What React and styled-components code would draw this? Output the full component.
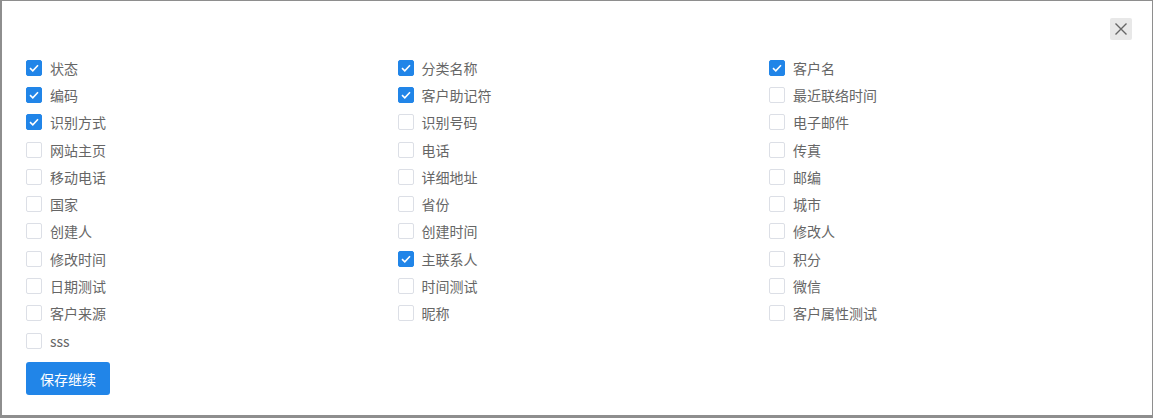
import React, { useState } from 'react'
import styled, { createGlobalStyle } from 'styled-components'

const GlobalStyle = createGlobalStyle`
  html, body {
    margin: 0;
    padding: 0;
    background: #8e8e8e;
  }
  body {
    font-family: "Noto Sans CJK SC", "Noto Sans", sans-serif;
  }
`

const Panel = styled.div`
  margin: 1px 1px 3px 2px;
  height: 414px;
  background: #fff;
  box-sizing: border-box;
  padding: 17px 20px 0 24px;
  display: flex;
  flex-direction: column;
`

const Header = styled.div`
  display: flex;
  justify-content: flex-end;
  height: 36px;
`

const CloseButton = styled.button`
  width: 22px;
  height: 22px;
  padding: 0;
  border: none;
  border-radius: 2px;
  background: #e8e8e8;
  color: #666;
  display: flex;
  align-items: center;
  justify-content: center;
  cursor: pointer;
`

const Grid = styled.div`
  display: grid;
  grid-template-columns: repeat(3, 371.5px);
  grid-auto-rows: 27.3px;
`

const Item = styled.label`
  display: flex;
  align-items: center;
  gap: 8px;
  font-size: 14px;
  color: #666;
  cursor: pointer;
`

const Box = styled.span`
  width: 16px;
  height: 16px;
  box-sizing: border-box;
  border-radius: 2px;
  border: 1px solid ${p => (p.$checked ? '#2185e8' : '#dcdfe6')};
  background: ${p => (p.$checked ? '#2185e8' : '#fff')};
  display: flex;
  align-items: center;
  justify-content: center;
  flex: none;
`

const SaveButton = styled.button`
  margin-top: 8px;
  align-self: flex-start;
  width: 84px;
  height: 33px;
  border: none;
  border-radius: 3px;
  background: #2185e8;
  color: #fff;
  font-family: inherit;
  font-size: 14px;
  cursor: pointer;
`

const fields = [
  ['状态', true], ['分类名称', true], ['客户名', true],
  ['编码', true], ['客户助记符', true], ['最近联络时间', false],
  ['识别方式', true], ['识别号码', false], ['电子邮件', false],
  ['网站主页', false], ['电话', false], ['传真', false],
  ['移动电话', false], ['详细地址', false], ['邮编', false],
  ['国家', false], ['省份', false], ['城市', false],
  ['创建人', false], ['创建时间', false], ['修改人', false],
  ['修改时间', false], ['主联系人', true], ['积分', false],
  ['日期测试', false], ['时间测试', false], ['微信', false],
  ['客户来源', false], ['昵称', false], ['客户属性测试', false],
  ['sss', false],
]

const Check = () => (
  <svg width="10" height="8" viewBox="0 0 10 8">
    <path d="M1 4.2 L3.8 6.8 L9 1.2" fill="none" stroke="#fff" strokeWidth="1.6" />
  </svg>
)

export default function App() {
  const [checked, setChecked] = useState(fields.map(f => f[1]))

  const toggle = i => setChecked(c => c.map((v, j) => (j === i ? !v : v)))

  return (
    <>
      <GlobalStyle />
      <Panel>
        <Header>
          <CloseButton aria-label="close">
            <svg width="14" height="14" viewBox="0 0 14 14">
              <path d="M1.5 1.5 L12.5 12.5 M12.5 1.5 L1.5 12.5" stroke="#666" strokeWidth="1.4" />
            </svg>
          </CloseButton>
        </Header>
        <Grid>
          {fields.map(([name], i) => (
            <Item key={name} onClick={() => toggle(i)}>
              <Box $checked={checked[i]}>{checked[i] && <Check />}</Box>
              {name}
            </Item>
          ))}
        </Grid>
        <SaveButton>保存继续</SaveButton>
      </Panel>
    </>
  )
}
